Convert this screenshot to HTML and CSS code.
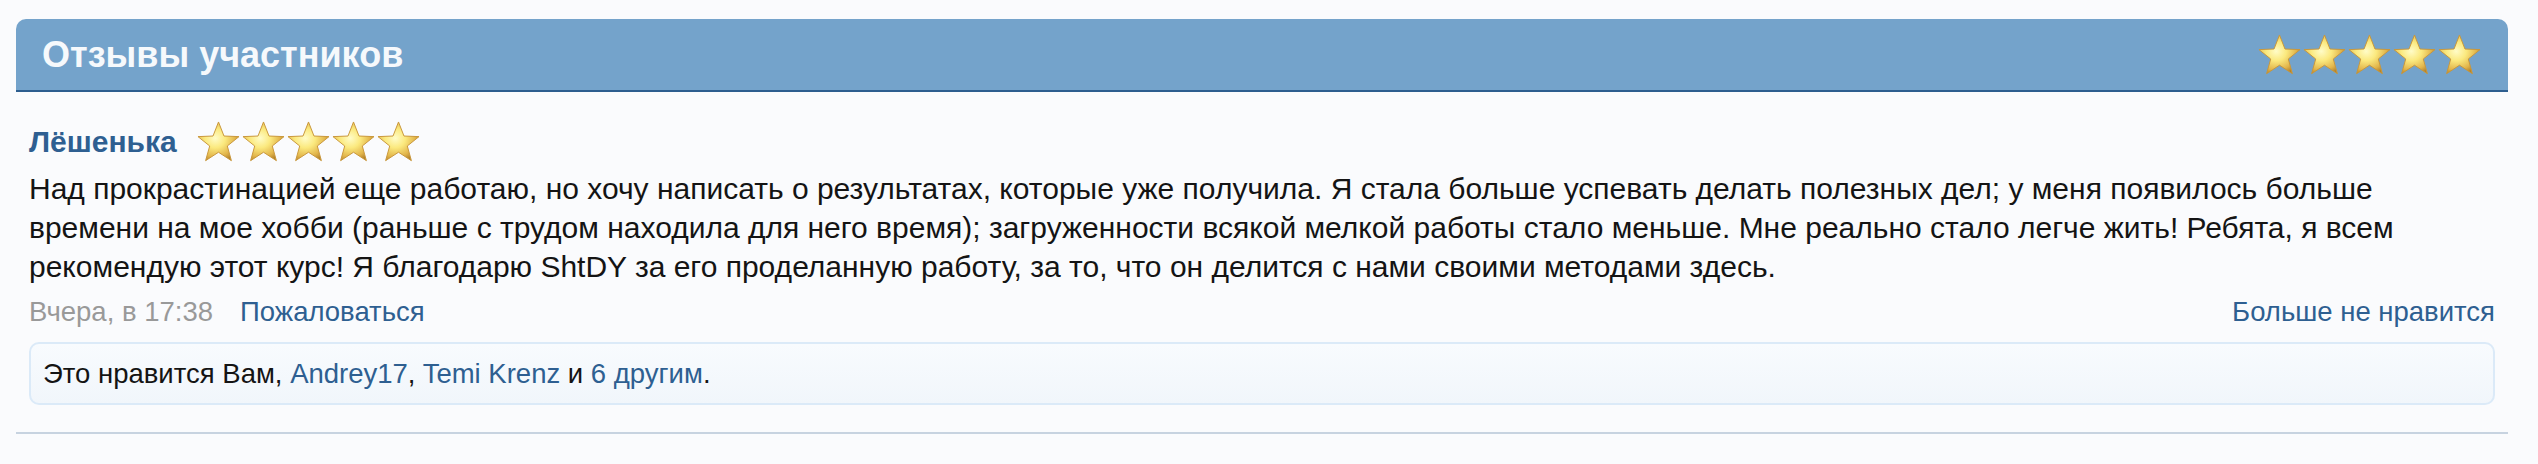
FILE: index.html
```html
<!DOCTYPE html>
<html lang="ru">

<head>
  <meta charset="UTF-8" />
  <title>Отзывы участников</title>
  <link rel="stylesheet" href="styles.css">
</head>

<body>
  <!-- звезда для рейтинга -->
  <svg width="0" height="0" class="defs">
    <defs>
      <radialGradient id="starFill" cx="42%" cy="42%" r="62%">
        <stop offset="0%" stop-color="#fffcc8" />
        <stop offset="40%" stop-color="#fbe97e" />
        <stop offset="78%" stop-color="#e2b54b" />
        <stop offset="100%" stop-color="#b3822a" />
      </radialGradient>
      <symbol id="star" viewBox="0 0 46 44">
        <path d="M23 2 L28.6 16.4 L44 17 L32 26.6 L36.2 41.6 L23 33 L9.8 41.6 L14 26.6 L2 17 L17.4 16.4 Z"
          fill="url(#starFill)" stroke="#c9973a" stroke-width="1" stroke-linejoin="round" />
      </symbol>
    </defs>
  </svg>

  <div class="reviews">
    <div class="reviews-head">
      <h2 class="reviews-title">Отзывы участников</h2>
      <div class="stars">
        <svg class="star"><use href="#star" /></svg>
        <svg class="star"><use href="#star" /></svg>
        <svg class="star"><use href="#star" /></svg>
        <svg class="star"><use href="#star" /></svg>
        <svg class="star"><use href="#star" /></svg>
      </div>
    </div>

    <div class="review">
      <div class="review-author">
        <a class="author-name" href="#">Лёшенька</a>
        <div class="stars">
          <svg class="star"><use href="#star" /></svg>
          <svg class="star"><use href="#star" /></svg>
          <svg class="star"><use href="#star" /></svg>
          <svg class="star"><use href="#star" /></svg>
          <svg class="star"><use href="#star" /></svg>
        </div>
      </div>
      <p class="review-text">Над прокрастинацией еще работаю, но хочу написать о результатах, которые уже получила. Я стала больше успевать делать полезных дел; у меня появилось больше времени на мое хобби (раньше с трудом находила для него время); загруженности всякой мелкой работы стало меньше. Мне реально стало легче жить! Ребята, я всем рекомендую этот курс! Я благодарю ShtDY за его проделанную работу, за то, что он делится с нами своими методами здесь.</p>
      <div class="review-meta">
        <div class="meta-left">
          <span class="review-date">Вчера, в 17:38</span>
          <a href="#">Пожаловаться</a>
        </div>
        <a href="#">Больше не нравится</a>
      </div>
      <div class="likes">
        Это нравится Вам, <a href="#">Andrey17</a>, <a href="#">Temi Krenz</a> и <a href="#">6 другим</a>.
      </div>
    </div>
  </div>
</body>

</html>
```

FILE: styles.css
```css
body {
  margin: 0;
  background: #fafbfd;
  font-family: "Liberation Sans", Arial, sans-serif;
  color: #141414;
}

a {
  color: #2e5f91;
  text-decoration: none;
}

.defs {
  position: absolute;
}

.reviews {
  padding: 19px 30px 0 16px;
}

.reviews-head {
  display: flex;
  align-items: center;
  justify-content: space-between;
  height: 71px;
  padding: 0 26px;
  background: #74a3cb;
  border-bottom: 2px solid #2d5e8f;
  border-radius: 10px 10px 0 0;
}

.reviews-title {
  margin: 0;
  font-size: 36px;
  font-weight: bold;
  color: #f6f9fc;
}

.stars {
  display: flex;
}

.star {
  width: 45px;
  height: 43px;
}

.review {
  padding: 28px 13px 0;
  border-bottom: 2px solid #c7d3e0;
}

.review-author {
  display: flex;
  align-items: center;
  gap: 19px;
}

.author-name {
  font-size: 30px;
  font-weight: bold;
}

.review-text {
  margin: 6px 0 0;
  font-size: 30px;
  line-height: 39px;
}

.review-meta {
  display: flex;
  justify-content: space-between;
  margin-top: 6px;
  font-size: 27.5px;
  line-height: 39px;
}

.meta-left {
  display: flex;
  gap: 27px;
}

.review-date {
  color: #999;
}

.likes {
  margin: 11px 0 27px;
  padding: 0 12px;
  height: 59px;
  line-height: 59px;
  font-size: 27.5px;
  background: linear-gradient(#f8fbfe, #f1f6fb);
  border: 2px solid #dbeaf8;
  border-radius: 10px;
}
```
